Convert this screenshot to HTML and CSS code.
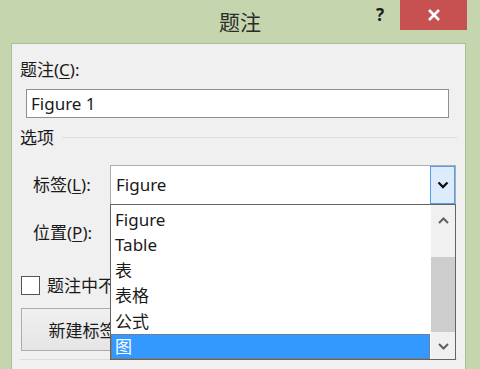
FILE: index.html
```html
<!DOCTYPE html>
<html lang="zh-CN">
<head>
    <meta charset="UTF-8">
    <title>题注</title>
    <link rel="stylesheet" href="styles.css">
</head>
<body>
    <div class="window">
        <div class="titlebar">
            <span class="title">题注</span>
            <span class="help">?</span>
            <span class="close">
                <svg width="14" height="14" viewBox="0 0 14 14">
                    <path d="M2 2 L12 12 M12 2 L2 12" stroke="#fff" stroke-width="2.6" fill="none"/>
                </svg>
            </span>
        </div>

        <div class="panel">
            <div class="label">题注(<u>C</u>):</div>
            <div class="input">Figure 1</div>

            <div class="group">
                <span>选项</span>
                <span class="group-line"></span>
            </div>

            <div class="row">
                <span class="row-label">标签(<u>L</u>):</span>
                <div class="combo">
                    <span class="combo-value">Figure</span>
                    <span class="combo-btn">
                        <svg width="12" height="8" viewBox="0 0 12 8">
                            <path d="M1.5 1.5 L6 6 L10.5 1.5" stroke="#111" stroke-width="2.4" fill="none"/>
                        </svg>
                    </span>

                    <!-- открытый список -->
                    <div class="droplist">
                        <ul class="items">
                            <li>Figure</li>
                            <li>Table</li>
                            <li>表</li>
                            <li>表格</li>
                            <li>公式</li>
                            <li class="selected">图</li>
                        </ul>
                        <div class="scrollbar">
                            <span class="arrow">
                                <svg width="11" height="7" viewBox="0 0 11 7">
                                    <path d="M1 6 L5.5 1.5 L10 6" stroke="#606060" stroke-width="2" fill="none"/>
                                </svg>
                            </span>
                            <span class="track-top"></span>
                            <span class="thumb"></span>
                            <span class="track-bottom"></span>
                            <span class="arrow arrow-down">
                                <svg width="11" height="7" viewBox="0 0 11 7">
                                    <path d="M1 1 L5.5 5.5 L10 1" stroke="#606060" stroke-width="2" fill="none"/>
                                </svg>
                            </span>
                        </div>
                    </div>
                </div>
            </div>

            <div class="row row-second">
                <span class="row-label">位置(<u>P</u>):</span>
            </div>

            <!-- нижняя часть закрыта списком, поэтому обрезаем по его левому краю -->
            <div class="check">
                <span class="box"></span>
                <span>题注中不包含标签(<u>E</u>)</span>
            </div>

            <div class="buttons">
                <button class="btn">新建标签(<u>N</u>)...</button>
            </div>

            <div class="bottom-line"></div>
        </div>
    </div>
</body>
</html>
```

FILE: styles.css
```css
body {
    margin: 0;
    font-family: 'Noto Sans', 'Noto Sans CJK SC', sans-serif;
    font-size: 17px;
    color: #1a1a1a;
}

.window {
    width: 480px;
    height: 369px;
    overflow: hidden;
    background: #c5d5ae;
    display: flex;
    flex-direction: column;
}

.titlebar {
    height: 43px;
    display: flex;
    align-items: flex-start;
    flex-shrink: 0;
}

.title {
    flex: 1;
    padding-left: 104px;
    text-align: center;
    font-size: 21px;
    line-height: 30px;
    padding-top: 7px;
    color: #2b2b2b;
}

.help {
    font-weight: 700;
    font-size: 17px;
    line-height: 20px;
    padding-top: 5px;
    color: #1e1e1e;
    margin-right: 16px;
}

.close {
    width: 67px;
    height: 30px;
    margin-right: 13px;
    background: #c75050;
    display: flex;
    align-items: center;
    justify-content: center;
}

.panel {
    flex: 1;
    margin-left: 11px;
    width: 455px;
    box-sizing: border-box;
    background: #f0f0f0;
    border: 1px solid #aebd98;
    border-bottom: none;
    padding: 14px 8px 0 8px;
}

.label {
    line-height: 24px;
}

u {
    text-decoration-thickness: 1px;
    text-underline-offset: 2px;
}

.input {
    margin: 7px 0 0 6px;
    width: 423px;
    height: 29px;
    box-sizing: border-box;
    border: 1px solid #8e8f8f;
    background: #fff;
    padding-left: 4px;
    line-height: 27px;
}

.group {
    margin-top: 8px;
    display: flex;
    align-items: center;
    gap: 8px;
    line-height: 24px;
}

.group-line {
    flex: 1;
    height: 1px;
    background: #dcdcdc;
    margin-top: -2px;
}

.row {
    margin-top: 15px;
    display: flex;
    align-items: center;
}

.row-label {
    width: 77px;
    padding-left: 13px;
    line-height: 24px;
}

.row-second {
    margin-top: 16px;
}

.combo {
    position: relative;
    width: 346px;
    height: 40px;
    box-sizing: border-box;
    border: 1px solid #abadb3;
    background: #fff;
    display: flex;
}

.combo-value {
    flex: 1;
    padding-left: 5px;
    line-height: 38px;
}

.combo-btn {
    width: 25px;
    box-sizing: border-box;
    border: 1px solid #569de5;
    background: #dcecfc;
    display: flex;
    align-items: center;
    justify-content: center;
}

.droplist {
    position: absolute;
    top: 38px;
    left: -1px;
    width: 346px;
    height: 156px;
    box-sizing: border-box;
    border: 1px solid #646464;
    background: #fff;
    display: flex;
    z-index: 2;
}

.items {
    list-style: none;
    margin: 0;
    padding: 2px 0 0 0;
    flex: 1;
}

.items li {
    height: 25.4px;
    line-height: 25.4px;
    padding-left: 4px;
    box-sizing: border-box;
}

.items .selected {
    height: 25px;
    background: #3399ff;
    color: #fff;
    border: 1px dotted #a0683c;
    padding-left: 3px;
    line-height: 23px;
}

.scrollbar {
    width: 24px;
    background: #f0f0f0;
    display: flex;
    flex-direction: column;
    margin-left: 1px;
}

.arrow {
    height: 30px;
    display: flex;
    align-items: center;
    justify-content: center;
}

.arrow-down {
    height: 25px;
}

.track-top {
    height: 22px;
}

.thumb {
    height: 75px;
    background: #cdcdcd;
}

.track-bottom {
    flex: 1;
}

.check {
    margin-top: 31px;
    width: 90px;
    overflow: hidden;
    display: flex;
    align-items: center;
    gap: 7px;
    line-height: 19px;
    white-space: nowrap;
}

.box {
    flex-shrink: 0;
    width: 19px;
    height: 19px;
    box-sizing: border-box;
    border: 1px solid #555;
    background: #fff;
    margin-left: 1px;
}

.buttons {
    margin-top: 13px;
    width: 90px;
    overflow: hidden;
    display: flex;
}

.btn {
    flex-shrink: 0;
    margin-left: 1px;
    width: 160px;
    height: 43px;
    border: 1px solid #acacac;
    background: linear-gradient(#f0f0f0, #e5e5e5);
    font-family: inherit;
    font-size: 17px;
    color: #1a1a1a;
    padding: 0;
    white-space: nowrap;
}

.bottom-line {
    margin-top: 8px;
    height: 1px;
    background: #dcdcdc;
}
```
